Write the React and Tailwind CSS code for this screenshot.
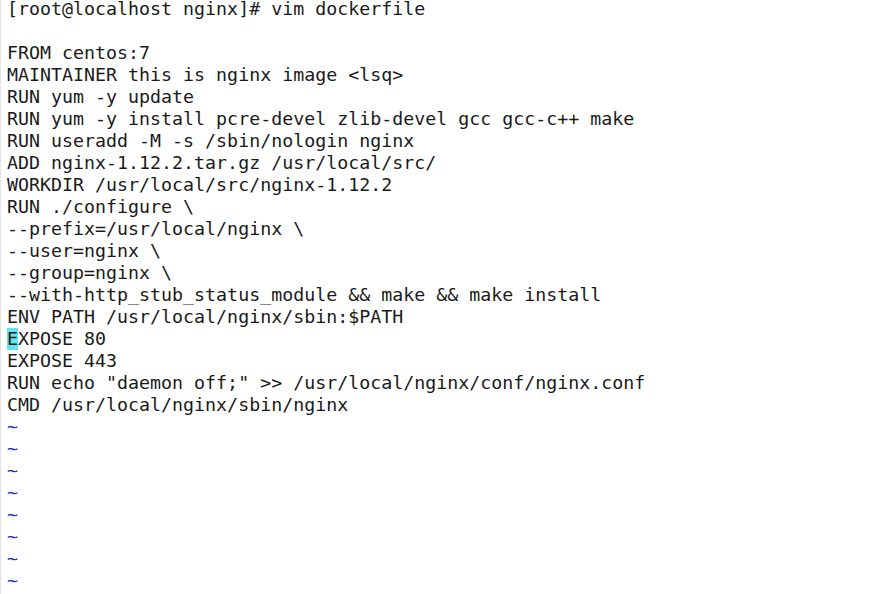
const lines = [
  '[root@localhost nginx]# vim dockerfile',
  '',
  'FROM centos:7',
  'MAINTAINER this is nginx image <lsq>',
  'RUN yum -y update',
  'RUN yum -y install pcre-devel zlib-devel gcc gcc-c++ make',
  'RUN useradd -M -s /sbin/nologin nginx',
  'ADD nginx-1.12.2.tar.gz /usr/local/src/',
  'WORKDIR /usr/local/src/nginx-1.12.2',
  'RUN ./configure \\',
  '--prefix=/usr/local/nginx \\',
  '--user=nginx \\',
  '--group=nginx \\',
  '--with-http_stub_status_module && make && make install',
  'ENV PATH /usr/local/nginx/sbin:$PATH',
  null,
  'EXPOSE 443',
  'RUN echo "daemon off;" >> /usr/local/nginx/conf/nginx.conf',
  'CMD /usr/local/nginx/sbin/nginx',
]

export default function App() {
  return (
    <div className="w-[894px] h-[594px] overflow-hidden bg-white border-l border-[#e4e4e4]">
      <div className="mt-[-2px] pl-[6px] font-['DejaVu_Sans_Mono',monospace] text-[18.3px] leading-[22px] text-[#1a1a1a] whitespace-pre">
        {lines.map((l, i) =>
          l === null ? (
            <div key={i} className="h-[22px]">
              <span className="inline-block h-[22px] align-top bg-[#62e6ec]">E</span>XPOSE 80
            </div>
          ) : (
            <div key={i} className="h-[22px]">{l}</div>
          )
        )}
        {Array.from({ length: 8 }).map((_, i) => (
          <div key={'t' + i} className="h-[22px] text-[#2a2ad8]">~</div>
        ))}
      </div>
    </div>
  )
}
